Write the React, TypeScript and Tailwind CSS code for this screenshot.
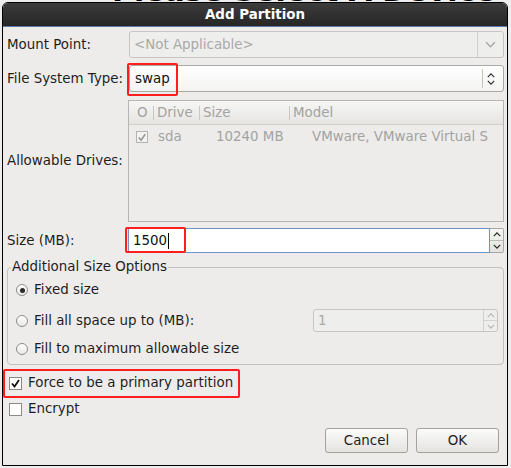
import React from "react";

function ChevronDown({ color = "#333", w = 10, h = 6 }: { color?: string; w?: number; h?: number }) {
  return (
    <svg width={w} height={h} viewBox="0 0 10 6" fill="none">
      <path d="M1 1 L5 5 L9 1" stroke={color} strokeWidth="1.4" />
    </svg>
  );
}
function ChevronUp({ color = "#333", w = 10, h = 6 }: { color?: string; w?: number; h?: number }) {
  return (
    <svg width={w} height={h} viewBox="0 0 10 6" fill="none">
      <path d="M1 5 L5 1 L9 5" stroke={color} strokeWidth="1.4" />
    </svg>
  );
}
function Check({ color }: { color: string }) {
  return (
    <svg width="11" height="11" viewBox="0 0 11 11" fill="none">
      <path d="M2 5.5 L4.5 8.5 L9 2" stroke={color} strokeWidth="1.8" />
    </svg>
  );
}

export default function App() {
  return (
    <div className="relative w-[511px] h-[468px] overflow-hidden bg-[#ededed] font-['DejaVu_Sans',sans-serif] text-[13.4px] leading-[16px] text-[#1e1e1e]">
      <div className="-mt-[23px] pl-[112px] text-[30px] leading-[28px] font-bold text-black whitespace-nowrap">
        Please Select A Device
      </div>

      <div className="absolute left-[2px] top-[2px] w-[506px] h-[464px] border border-black rounded-t-[6px] bg-[#edeceb] flex flex-col overflow-hidden">
        {/* title bar */}
        <div className="h-[24px] shrink-0 bg-gradient-to-b from-[#3c3c3c] to-[#262626] border-b border-[#5b7aa5] flex items-center justify-center text-white font-bold">
          Add Partition
        </div>

        <div className="flex flex-col pl-[4px] pr-[3px] pt-[4px]">
          {/* Mount point */}
          <div className="grid grid-cols-[122px_1fr] h-[27px]">
            <div className="flex items-center whitespace-nowrap">Mount Point:</div>
            <div className="flex h-[27px] border border-[#c6c5c1] rounded-[3px] bg-[#eeeeec]">
              <div className="flex-1 flex items-center pl-[4px] text-[#a9a9a7]">&lt;Not Applicable&gt;</div>
              <div className="w-[26px] border-l border-[#cfceca] flex items-center justify-center">
                <ChevronDown color="#aaaaaa" w={11} h={7} />
              </div>
            </div>
          </div>

          {/* File system type */}
          <div className="grid grid-cols-[122px_1fr] h-[27px] mt-[7px]">
            <div className="flex items-center whitespace-nowrap">File System Type:</div>
            <div className="relative flex h-[27px] border border-[#a9a8a4] rounded-[3px] bg-gradient-to-b from-[#ffffff] to-[#f3f3f2]">
              <div className="flex-1 flex items-center pl-[5px] text-[#111]">swap</div>
              <div className="w-[21px] flex items-center">
                <div className="w-px h-[19px] bg-[#c4c3bf]" />
                <div className="flex flex-col items-center gap-[2px] ml-[4px]">
                  <ChevronUp color="#2a2a2a" w={8} h={5} />
                  <ChevronDown color="#2a2a2a" w={8} h={5} />
                </div>
              </div>
              <div className="absolute -left-[3px] -top-[3px] w-[51px] h-[33px] border-2 border-[#ff1e1e] rounded-[2px]" />
            </div>
          </div>

          {/* Drives */}
          <div className="grid grid-cols-[122px_1fr] h-[122px] mt-[8px]">
            <div className="flex items-center whitespace-nowrap">Allowable Drives:</div>
            <div className="-ml-px border border-[#b6b5b1] bg-[#edeceb] flex flex-col">
              <div className="h-[24px] shrink-0 bg-gradient-to-b from-[#f6f6f5] to-[#e6e5e2] border-b border-[#cfcecb] flex items-center text-[#a3a3a1]">
                <div className="w-[24px] pl-[8px]">O</div>
                <div className="w-px h-[14px] bg-[#c8c7c3]" />
                <div className="w-[45px] pl-[3px]">Drive</div>
                <div className="w-px h-[14px] bg-[#c8c7c3]" />
                <div className="w-[89px] pl-[3px]">Size</div>
                <div className="w-px h-[14px] bg-[#c8c7c3]" />
                <div className="pl-[3px]">Model</div>
              </div>
              <div className="h-[24px] flex items-center text-[#a3a3a1]">
                <div className="w-[29px] pl-[7px] flex items-center">
                  <div className="w-[12px] h-[12px] border border-[#b5b4b0] bg-[#f2f2f0] flex items-center justify-center">
                    <Check color="#9a9a98" />
                  </div>
                </div>
                <div className="w-[58px]">sda</div>
                <div className="w-[96px] whitespace-nowrap">10240 MB</div>
                <div className="whitespace-nowrap">VMware, VMware Virtual S</div>
              </div>
            </div>
          </div>

          {/* Size */}
          <div className="grid grid-cols-[122px_1fr] h-[25px] mt-[6px]">
            <div className="flex items-center whitespace-nowrap">Size (MB):</div>
            <div className="relative -ml-px flex h-[25px]">
              <div className="flex-1 flex items-center border border-[#6f93c4] bg-white pl-[4px] text-[#111]">
                1500<span className="inline-block w-px h-[16px] bg-black ml-px" />
              </div>
              <div className="w-[14px] flex flex-col border border-l-0 border-[#a9a8a4] rounded-r-[2px] bg-gradient-to-b from-[#f7f7f6] to-[#e3e2df]">
                <div className="flex-1 flex items-center justify-center border-b border-[#bdbcb8]">
                  <ChevronUp color="#222" w={8} h={5} />
                </div>
                <div className="flex-1 flex items-center justify-center">
                  <ChevronDown color="#222" w={8} h={5} />
                </div>
              </div>
              <div className="absolute -left-[3px] -top-px w-[61px] h-[26px] border-2 border-[#ff1e1e] rounded-[2px]" />
            </div>
          </div>

          {/* Additional size options */}
          <fieldset className="mt-[6px] border border-[#c2c1bd] rounded-[4px] pl-[8px] pr-[5px] pb-[7px]">
            <legend className="-ml-[5px] px-[1px] leading-[16px] whitespace-nowrap">Additional Size Options</legend>
            <div className="mt-[2px] h-[26px] flex items-center gap-[6px]">
              <div className="w-[12px] h-[12px] rounded-full border border-[#8d8c88] bg-gradient-to-b from-white to-[#e8e8e6] flex items-center justify-center">
                <div className="w-[5px] h-[5px] rounded-full bg-[#2a2a2a]" />
              </div>
              <span>Fixed size</span>
            </div>
            <div className="mt-[6px] h-[23px] flex items-center">
              <div className="flex items-center gap-[6px] flex-1">
                <div className="w-[12px] h-[12px] rounded-full border border-[#8d8c88] bg-gradient-to-b from-white to-[#e8e8e6]" />
                <span className="whitespace-nowrap">Fill all space up to (MB):</span>
              </div>
              <div className="w-[185px] h-[23px] flex border border-[#c6c5c1] rounded-[3px] bg-[#eeeeec]">
                <div className="flex-1 flex items-center pl-[4px] text-[#a9a9a7]">1</div>
                <div className="w-[14px] flex flex-col border-l border-[#d3d2ce]">
                  <div className="flex-1 flex items-center justify-center border-b border-[#d3d2ce]">
                    <ChevronUp color="#b5b5b3" w={8} h={5} />
                  </div>
                  <div className="flex-1 flex items-center justify-center">
                    <ChevronDown color="#b5b5b3" w={8} h={5} />
                  </div>
                </div>
              </div>
            </div>
            <div className="mt-[9px] h-[16px] flex items-center gap-[6px]">
              <div className="w-[12px] h-[12px] rounded-full border border-[#8d8c88] bg-gradient-to-b from-white to-[#e8e8e6]" />
              <span className="whitespace-nowrap">Fill to maximum allowable size</span>
            </div>
          </fieldset>
        </div>

        {/* checkboxes */}
        <div className="relative mt-[4px] h-[28px] flex items-center pl-[6px] gap-[6px]">
          <div className="w-[13px] h-[13px] border border-[#8a8986] bg-white flex items-center justify-center">
            <Check color="#111" />
          </div>
          <span className="whitespace-nowrap">Force to be a primary partition</span>
          <div className="absolute left-0 top-0 w-[237px] h-[29px] border-2 border-[#ff1e1e] rounded-[2px]" />
        </div>
        <div className="h-[24px] flex items-center pl-[6px] gap-[6px]">
          <div className="w-[13px] h-[13px] border border-[#8a8986] bg-white" />
          <span>Encrypt</span>
        </div>

        {/* buttons */}
        <div className="mt-[7px] flex justify-end gap-[8px] pr-[8px]">
          <button className="w-[83px] h-[25px] border border-[#a3a29e] rounded-[3px] bg-gradient-to-b from-[#fbfbfa] to-[#e4e3e0] text-[#1e1e1e]">
            Cancel
          </button>
          <button className="w-[83px] h-[25px] border border-[#a3a29e] rounded-[3px] bg-gradient-to-b from-[#fbfbfa] to-[#e4e3e0] text-[#1e1e1e]">
            OK
          </button>
        </div>
      </div>
    </div>
  );
}
